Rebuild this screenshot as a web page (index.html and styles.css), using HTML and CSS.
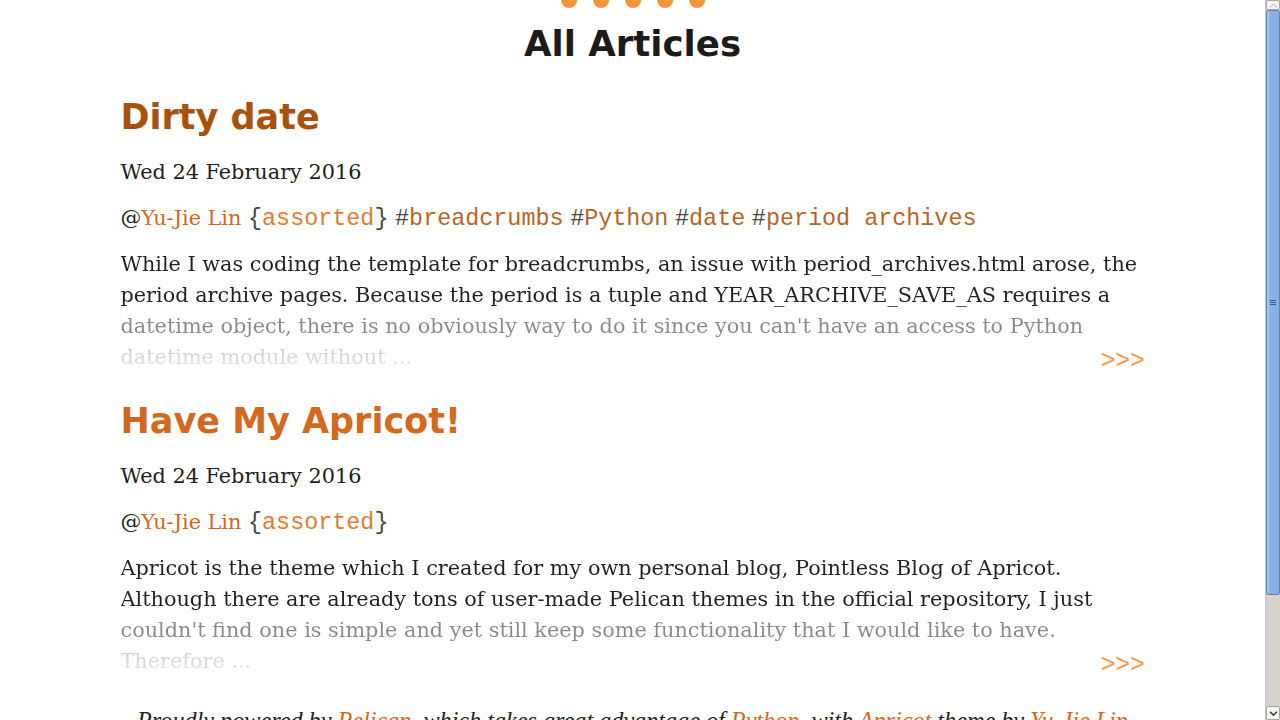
FILE: index.html
```html
<!DOCTYPE html>
<html lang="en">
<head>
<meta charset="utf-8">
<title>All Articles</title>
<link rel="stylesheet" href="styles.css">
</head>
<body>
<div class="viewport">
  <div class="page">
    <header class="top">
      <div class="dots"><span></span><span></span><span></span><span></span><span></span></div>
      <h1>All Articles</h1>
    </header>

    <article class="entry">
      <h2><a class="visited" href="#">Dirty date</a></h2>
      <p class="date">Wed 24 February 2016</p>
      <p class="meta">@<a href="#">Yu-Jie Lin</a> <code>{<a href="#">assorted</a>}</code> <code>#<a class="visited" href="#">breadcrumbs</a></code> <code>#<a class="visited" href="#">Python</a></code> <code>#<a class="visited" href="#">date</a></code> <code>#<a class="visited" href="#">period archives</a></code></p>
      <div class="summary">
        <p class="fade">While I was coding the template for breadcrumbs, an issue with period_archives.html arose, the period archive pages. Because the period is a tuple and YEAR_ARCHIVE_SAVE_AS requires a datetime object, there is no obviously way to do it since you can't have an access to Python datetime module without ...</p>
        <a class="more" href="#">&gt;&gt;&gt;</a>
      </div>
    </article>

    <article class="entry">
      <h2><a href="#">Have My Apricot!</a></h2>
      <p class="date">Wed 24 February 2016</p>
      <p class="meta">@<a href="#">Yu-Jie Lin</a> <code>{<a href="#">assorted</a>}</code></p>
      <div class="summary">
        <p class="fade">Apricot is the theme which I created for my own personal blog, Pointless Blog of Apricot. Although there are already tons of user-made Pelican themes in the official repository, I just couldn't find one is simple and yet still keep some functionality that I would like to have. Therefore ...</p>
        <a class="more" href="#">&gt;&gt;&gt;</a>
      </div>
    </article>

    <footer class="foot">
      <p>Proudly powered by <a href="#">Pelican</a>, which takes great advantage of <a href="#">Python</a>, with <a href="#">Apricot</a> theme by <a href="#">Yu-Jie Lin</a></p>
    </footer>
  </div>
</div>
<div class="scrollbar" aria-hidden="true">
  <div class="sb-btn sb-up"><svg width="9" height="5" viewBox="0 0 9 5"><path d="M1 4.5 L4.5 1 L8 4.5" fill="none" stroke="#b0b0b0" stroke-width="1"/></svg></div>
  <div class="sb-thumb"><span class="grip"></span></div>
  <div class="sb-track"></div>
  <div class="sb-btn sb-down"><svg width="9" height="5" viewBox="0 0 9 5"><path d="M1 0.8 L4.5 4.2 L8 0.8" fill="none" stroke="#2a2a2a" stroke-width="1.3"/></svg></div>
</div>
</body>
</html>
```
FILE: styles.css
```css
html, body {
  margin: 0;
  height: 100%;
}

body {
  display: flex;
  overflow: hidden;
  background: #ffffff;
}

.viewport {
  flex: 1;
  min-width: 0;
  overflow: hidden;
}

.page {
  max-width: 1024px;
  margin: 0 auto;
  font-family: "DejaVu Serif", serif;
  font-size: 20.8px;
  line-height: 31px;
  color: #222222;
  padding-bottom: 160px;
}

a {
  color: #d2691e;
  text-decoration: none;
}

a.visited {
  color: #a8530b;
}

.dots {
  display: flex;
  justify-content: center;
  gap: 16px;
  margin-top: -8px;
}

.dots span {
  width: 16px;
  height: 16px;
  border-radius: 50%;
  background: #f39641;
}

h1 {
  margin: 14px 0 0;
  font-family: "DejaVu Sans", sans-serif;
  font-weight: bold;
  font-size: 35.6px;
  line-height: 44px;
  text-align: center;
  color: #1b1b1b;
}

.entry {
  margin-bottom: 26px;
}

.entry h2 {
  margin: 29px 0 0;
  font-family: "DejaVu Sans", sans-serif;
  font-weight: bold;
  font-size: 35px;
  line-height: 44px;
}

.entry + .entry h2 {
  margin-top: 0;
}

.date {
  margin: 18px 0 0;
}

.meta {
  margin: 15px 0 0;
}

.meta code {
  font-family: "Liberation Mono", monospace;
  font-size: 23.4px;
  color: #4a4a4a;
}

.meta code a {
  color: #dc7d34;
}

.meta code a.visited {
  color: #b4662a;
}

.summary {
  position: relative;
  margin-top: 14px;
}

.fade {
  margin: 0;
  background: linear-gradient(to bottom,
    #222222 0, #222222 62px,
    #8a8a8a 62px, #8a8a8a 93px,
    #c4c4c4 93px, #ededed 124px);
  -webkit-background-clip: text;
  background-clip: text;
  color: transparent;
}

.more {
  position: absolute;
  right: 0;
  bottom: 1px;
  font-family: "Liberation Sans", sans-serif;
  font-size: 25px;
  line-height: 25px;
  color: #f29a48;
}

.foot {
  margin-top: 28px;
  text-align: center;
}

.foot p {
  margin: 0;
  font-family: "Liberation Serif", serif;
  font-style: italic;
  font-size: 24.2px;
  line-height: 31px;
}

/* classic scrollbar on the right edge */
.scrollbar {
  width: 15px;
  flex: none;
  display: flex;
  flex-direction: column;
  background: #d6d3cf;
  box-sizing: border-box;
  border-left: 1px solid #c8c5c0;
}

.sb-btn {
  display: flex;
  align-items: center;
  justify-content: center;
  background: #f4f4f2;
  border: 1px solid #a9a7a3;
  border-radius: 2px;
}

.sb-up {
  height: 10px;
  box-sizing: border-box;
}

.sb-down {
  height: 14px;
  box-sizing: border-box;
}

.sb-thumb {
  height: 585px;
  box-sizing: border-box;
  border: 1px solid #5f87bf;
  border-radius: 2px;
  background: linear-gradient(to right, #a8c4ea 0, #a8c4ea 2px, #8db2e3 2px, #87ade0 100%);
  display: flex;
  align-items: center;
  justify-content: center;
}

.grip {
  width: 6px;
  height: 5px;
  background: repeating-linear-gradient(to bottom, #3d5f90 0, #3d5f90 1px, transparent 1px, transparent 2px);
}

.sb-track {
  flex: 1;
}
```
